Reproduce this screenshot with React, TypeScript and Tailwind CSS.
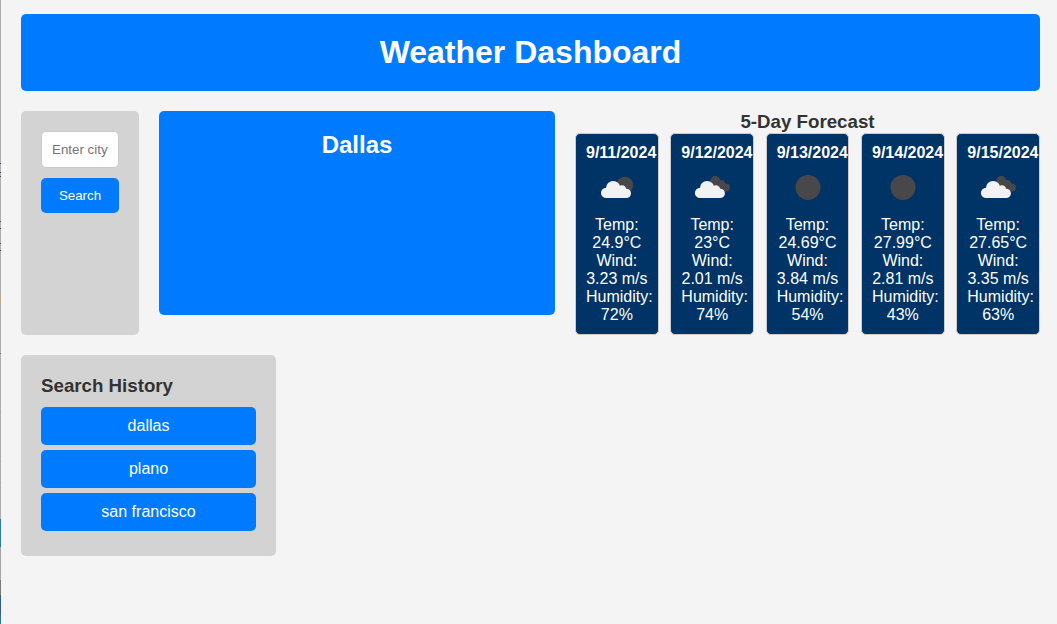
type Sky = "few" | "broken" | "clear";

type Day = {
  date: string;
  sky: Sky;
  temp: string;
  wind: string;
  humidity: string;
};

const days: Day[] = [
  { date: "9/11/2024", sky: "few", temp: "24.9", wind: "3.23", humidity: "72" },
  { date: "9/12/2024", sky: "broken", temp: "23", wind: "2.01", humidity: "74" },
  { date: "9/13/2024", sky: "clear", temp: "24.69", wind: "3.84", humidity: "54" },
  { date: "9/14/2024", sky: "clear", temp: "27.99", wind: "2.81", humidity: "43" },
  { date: "9/15/2024", sky: "broken", temp: "27.65", wind: "3.35", humidity: "63" },
];

const searches = ["dallas", "plano", "san francisco"];

function Cloud({ x }: { x: number }) {
  return (
    <g transform={`translate(${x} 0)`} fill="#f2f2f2">
      <circle cx="14.2" cy="30.9" r="5.2" />
      <circle cx="21.2" cy="26.2" r="7.2" />
      <circle cx="30" cy="27.5" r="4.2" />
      <circle cx="34.3" cy="31.4" r="4.7" />
      <path d="M14.2 25.7H30L34.3 28V36.1H14.2Z" />
    </g>
  );
}

function SkyIcon({ sky }: { sky: Sky }) {
  return (
    <svg className="mb-1 h-[50px] w-[50px] shrink-0" viewBox="0 0 50 50">
      {sky === "clear" && <circle cx="25" cy="25.4" r="12.5" fill="#48484a" />}
      {sky === "few" && (
        <>
          <circle cx="32.8" cy="23.1" r="8.4" fill="#48484a" />
          <Cloud x={0} />
        </>
      )}
      {sky === "broken" && (
        <>
          <g fill="#48484a">
            <circle cx="28.2" cy="19" r="5" />
            <circle cx="34.4" cy="21.6" r="3.6" />
            <circle cx="39" cy="25.4" r="3.9" />
            <path d="M28 19L34 18L39 22V29.3H33Z" />
          </g>
          <Cloud x={-1.1} />
        </>
      )}
    </svg>
  );
}

function DayCard({ day }: { day: Day }) {
  return (
    <div className="flex w-[18%] flex-col items-center rounded-[5px] border border-[#cccccc] bg-[#003366] p-2.5 text-center text-white">
      <h4 className="self-start font-bold">{day.date}</h4>
      <SkyIcon sky={day.sky} />
      <p className="w-full">Temp: {day.temp}°C</p>
      <p className="w-full">Wind: {day.wind} m/s</p>
      <p className="w-full">Humidity: {day.humidity}%</p>
    </div>
  );
}

function WindowEdge() {
  return (
    <div className="flex w-px shrink-0 flex-col bg-[#adadad]">
      <div className="h-[163px]" />
      <div className="h-px bg-[#344a60]" />
      <div className="h-2" />
      <div className="h-px bg-[#344a60]" />
      <div className="h-[3px]" />
      <div className="h-px bg-[#344a60]" />
      <div className="h-11" />
      <div className="h-px bg-[#555b63]" />
      <div className="h-1.5" />
      <div className="h-px bg-[#344a60]" />
      <div className="h-3.5" />
      <div className="h-px bg-[#555b63]" />
      <div className="h-1.5" />
      <div className="h-px bg-[#344a60]" />
      <div className="h-[46px]" />
      <div className="h-1 bg-[#c4a675]" />
      <div className="h-[52px]" />
      <div className="h-px bg-[#746d62]" />
      <div className="h-[58px]" />
      <div className="h-px bg-[#8ba5ca]" />
      <div className="h-12" />
      <div className="h-px bg-[#8ba5ca]" />
      <div className="h-5" />
      <div className="h-px bg-[#8ba5ca]" />
      <div className="h-9" />
      <div className="h-7 bg-[#2b7bb0]" />
      <div className="h-[33px] bg-[#a5a5a5]" />
      <div className="h-[15px] bg-[#7c7875]" />
      <div className="h-5 bg-[#345c8c]" />
      <div className="flex-1 bg-[#2b70a4]" />
    </div>
  );
}

export default function App() {
  return (
    <div className="flex h-screen overflow-hidden bg-[#f4f4f4] font-['Liberation_Sans',Arial,sans-serif] text-base leading-[18px] text-[#333333]">
      <WindowEdge />
      <div className="min-w-0 flex-1 pt-3.5 pr-[17px] pl-5">
        <header className="rounded-[5px] bg-[#007bff] p-5 text-center text-white">
          <h1 className="text-[32px] leading-[37px] font-bold">Weather Dashboard</h1>
        </header>
        <main className="mt-5 flex items-start gap-5">
          <section className="h-56 w-[118px] shrink-0 rounded-[5px] bg-[#d3d3d3] p-5">
            <input
              className="block h-[37px] w-full rounded-[5px] border border-[#cccccc] bg-white px-2.5 text-[13.333px] placeholder:text-[#757575]"
              placeholder="Enter city"
            />
            <button className="mt-2.5 block h-[35px] w-full rounded-[5px] bg-[#007bff] text-[13.333px] leading-[15px] text-white">
              Search
            </button>
          </section>
          <section className="h-[204px] w-[396px] shrink-0 rounded-[5px] bg-[#007bff] p-5 text-center text-white">
            <h2 className="text-2xl leading-[27px] font-bold">Dallas</h2>
          </section>
          <section className="min-w-0 flex-1">
            <h3 className="h-[22px] text-center text-[18.72px] leading-[21px] font-bold">5-Day Forecast</h3>
            <div className="flex justify-between">
              {days.map((day) => (
                <DayCard key={day.date} day={day} />
              ))}
            </div>
          </section>
        </main>
        <aside className="mt-5 h-[201px] w-[255px] rounded-[5px] bg-[#d3d3d3] p-5">
          <h3 className="mb-2.5 h-[22px] text-[18.72px] leading-[21px] font-bold">Search History</h3>
          <div className="flex flex-col gap-[5px]">
            {searches.map((city) => (
              <button key={city} className="h-[38px] rounded-[5px] bg-[#007bff] p-2.5 text-white">
                {city}
              </button>
            ))}
          </div>
        </aside>
      </div>
    </div>
  );
}
